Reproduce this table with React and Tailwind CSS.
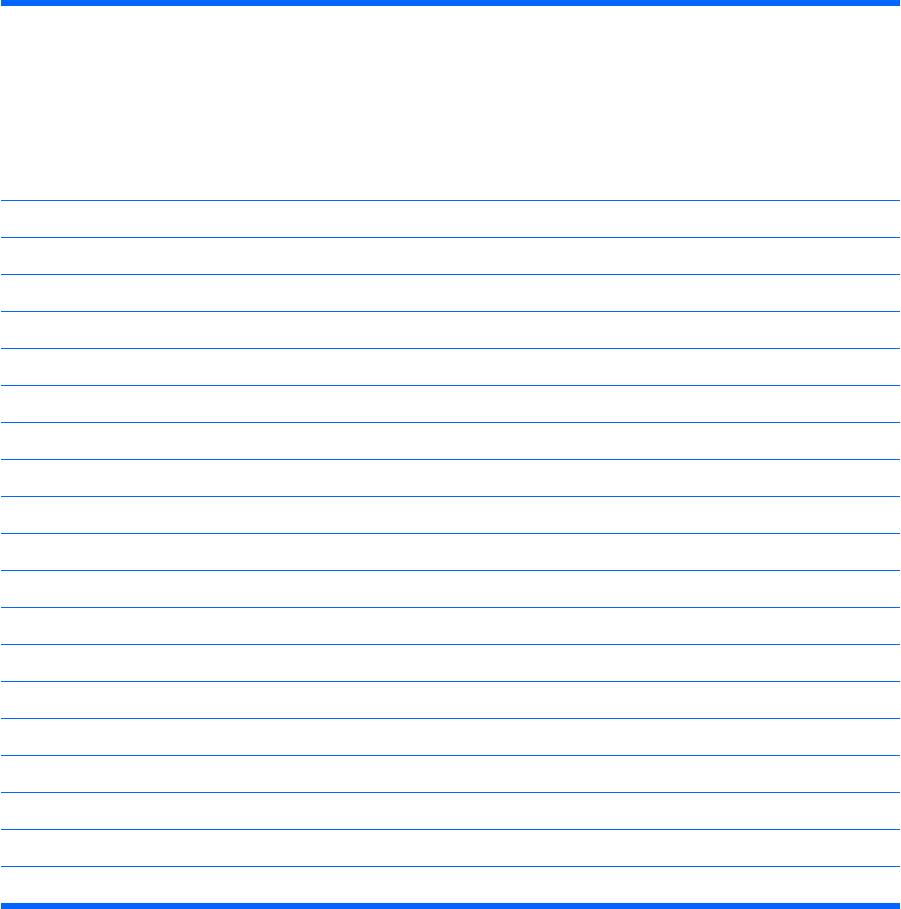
export default function App() {
  const rows = Array.from({ length: 18 });
  return (
    <div className="w-[901px] h-[909px] bg-white" style={{ fontFamily: '"Liberation Sans", sans-serif' }}>
      <div className="ml-px w-[899px] flex flex-col">
        <div className="h-[6px] bg-[#0066ff]" />
        <div className="h-[195px] border-b border-[#0066ff]" />
        {rows.map((_, i) => (
          <div key={i} className="h-[37px] border-b border-[#0066ff]" />
        ))}
        <div className="h-[36px]" />
        <div className="h-[6px] bg-[#0066ff]" />
      </div>
    </div>
  );
}
